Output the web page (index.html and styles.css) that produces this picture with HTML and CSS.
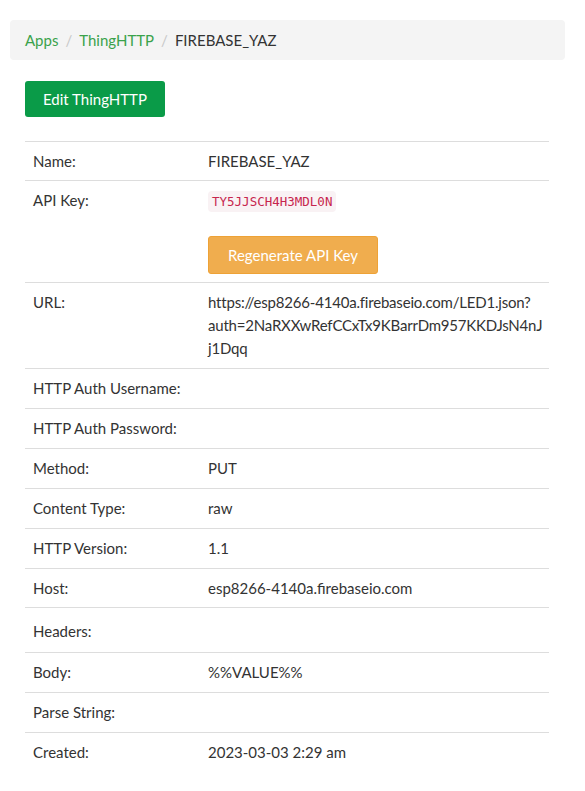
FILE: index.html
```html
<!DOCTYPE html>
<html>
<head>
<meta charset="utf-8">
<link rel="stylesheet" href="styles.css">
</head>
<body>
<div class="page">
  <nav class="crumbs">
    <a class="crumb-link" href="#">Apps</a>
    <span class="sep">/</span>
    <a class="crumb-link" href="#">ThingHTTP</a>
    <span class="sep">/</span>
    <span class="crumb-active">FIREBASE_YAZ</span>
  </nav>
  <div class="content">
    <button class="btn btn-green">Edit ThingHTTP</button>
    <table class="info">
      <tr class="first"><td class="lbl">Name:</td><td>FIREBASE_YAZ</td></tr>
      <tr><td class="lbl">API Key:</td><td><code class="key">TY5JJSCH4H3MDL0N</code><div class="regen"><button class="btn btn-orange">Regenerate API Key</button></div></td></tr>
      <tr><td class="lbl">URL:</td><td class="wrap">https://esp8266-4140a.firebaseio.com/LED1.json?<wbr>auth=2NaRXXwRefCCxTx9KBarrDm957KKDJsN4nJj1Dqq</td></tr>
      <tr><td class="lbl">HTTP Auth Username:</td><td></td></tr>
      <tr><td class="lbl">HTTP Auth Password:</td><td></td></tr>
      <tr><td class="lbl">Method:</td><td>PUT</td></tr>
      <tr><td class="lbl">Content Type:</td><td>raw</td></tr>
      <tr><td class="lbl">HTTP Version:</td><td>1.1</td></tr>
      <tr class="short"><td class="lbl">Host:</td><td>esp8266-4140a.firebaseio.com</td></tr>
      <tr class="tall"><td class="lbl">Headers:</td><td></td></tr>
      <tr><td class="lbl">Body:</td><td>%%VALUE%%</td></tr>
      <tr><td class="lbl">Parse String:</td><td></td></tr>
      <tr class="last"><td class="lbl">Created:</td><td>2023-03-03 2:29 am</td></tr>
    </table>
  </div>
</div>
</body>
</html>
```
FILE: styles.css
```css
* { box-sizing: border-box; }
body {
  margin: 0;
  background: #fff;
  color: #333;
  font-family: Lato, "Liberation Sans", sans-serif;
  font-size: 15px;
}
.page {
  padding: 20px 20px 0 10px;
}
.crumbs {
  background: #f4f4f4;
  border-radius: 4px;
  height: 40px;
  padding: 0 15px;
  display: flex;
  align-items: center;
  font-size: 15px;
}
.crumb-link {
  color: #3aa24b;
  text-decoration: none;
}
.sep {
  color: #c8c8c8;
  padding: 0 7px;
}
.crumb-active { color: #333; }
.content {
  padding: 21px 6px 0 15px;
}
.btn {
  border: none;
  color: #fff;
  font-family: Lato, "Open Sans", sans-serif;
  font-size: 15px;
  cursor: pointer;
  display: block;
}
.btn-green {
  background: #0a9b48;
  border-radius: 3px;
  width: 140px;
  height: 36px;
}
.btn-orange {
  background: #f0ad4e;
  border: 1px solid #eea236;
  border-radius: 3px;
  width: 170px;
  height: 38px;
}
.info {
  margin-top: 24px;
  width: 524px;
  border-collapse: collapse;
}
.info td {
  border-top: 1px solid #ddd;
  padding: 8px;
  line-height: 23px;
  vertical-align: top;
}
.info td.lbl { width: 175px; }
.info tr.first td { padding-bottom: 7px; }
.info tr.short td { padding-bottom: 7px; }
.info tr.tall td { padding-top: 12px; padding-bottom: 9px; }
.info td.wrap { overflow-wrap: anywhere; letter-spacing: -0.2px; padding-right: 4px; }
.key {
  font-family: "DejaVu Sans Mono", "Liberation Mono", monospace;
  font-size: 12.5px;
  color: #c7254e;
  background: #f9f2f4;
  border-radius: 4px;
  padding: 3px 4px;
}
.regen { margin-top: 23px; }
```
